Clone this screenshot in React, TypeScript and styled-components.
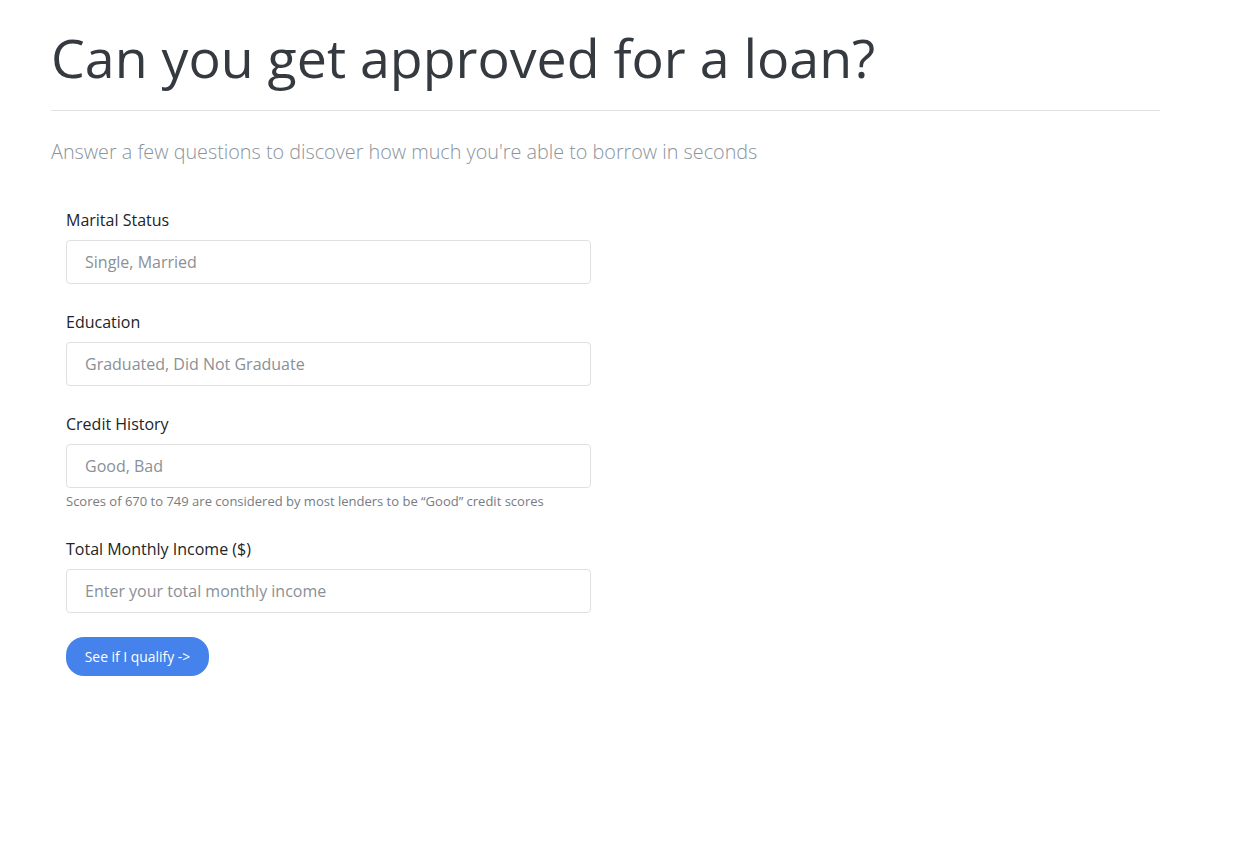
import React from "react";
import styled, { createGlobalStyle } from "styled-components";

const Global = createGlobalStyle`
  html, body { margin: 0; padding: 0; background: #fff; }
  body { font-family: "Open Sans", "Noto Sans", sans-serif; color: #212529; }
  * { box-sizing: border-box; }
`;

const Page = styled.main`
  padding: 20px 86px 0 51px;
  width: 1246px;
`;

const Title = styled.h1`
  margin: 0;
  font-size: 53.7px;
  font-weight: 400;
  line-height: 76px;
  color: #343a40;
`;

const Rule = styled.hr`
  margin: 14px 0 0;
  border: 0;
  border-top: 1px solid #e1e1e1;
`;

const Lead = styled.p`
  margin: 26px 0 0;
  font-size: 19.8px;
  font-weight: 300;
  line-height: 30px;
  color: #8a949c;
`;

const Form = styled.form`
  margin-top: 41px;
  padding-left: 15px;
  width: 540px;
  display: flex;
  flex-direction: column;
`;

const Field = styled.div`
  display: flex;
  flex-direction: column;
  margin-bottom: 26px;
`;

const Label = styled.label`
  font-size: 16px;
  line-height: 24px;
  color: #212529;
  margin-bottom: 8px;
`;

const Input = styled.input`
  width: 525px;
  height: 44px;
  padding: 0 18px;
  border: 1px solid #e0e0e0;
  border-radius: 4px;
  font-family: inherit;
  font-size: 16px;
  color: #495057;
  &::placeholder { color: #8a9096; }
`;

const Help = styled.small`
  margin-top: 4px;
  font-size: 13px;
  line-height: 19px;
  color: #767c82;
`;

const Button = styled.button`
  align-self: flex-start;
  margin-top: -2px;
  width: 143px;
  height: 39px;
  padding: 0;
  border: 0;
  border-radius: 18px;
  background: #4582ec;
  color: #fff;
  font-family: inherit;
  font-size: 13.9px;
  cursor: pointer;
`;

export default function App() {
  return (
    <>
      <Global />
      <Page>
        <Title>Can you get approved for a loan?</Title>
        <Rule />
        <Lead>Answer a few questions to discover how much you're able to borrow in seconds</Lead>
        <Form onSubmit={(e) => e.preventDefault()}>
          <Field>
            <Label>Marital Status</Label>
            <Input placeholder="Single, Married" />
          </Field>
          <Field>
            <Label>Education</Label>
            <Input placeholder="Graduated, Did Not Graduate" />
          </Field>
          <Field>
            <Label>Credit History</Label>
            <Input placeholder="Good, Bad" />
            <Help>Scores of 670 to 749 are considered by most lenders to be “Good” credit scores</Help>
          </Field>
          <Field>
            <Label>Total Monthly Income ($)</Label>
            <Input placeholder="Enter your total monthly income" />
          </Field>
          <Button type="submit">See if I qualify -&gt;</Button>
        </Form>
      </Page>
    </>
  );
}
